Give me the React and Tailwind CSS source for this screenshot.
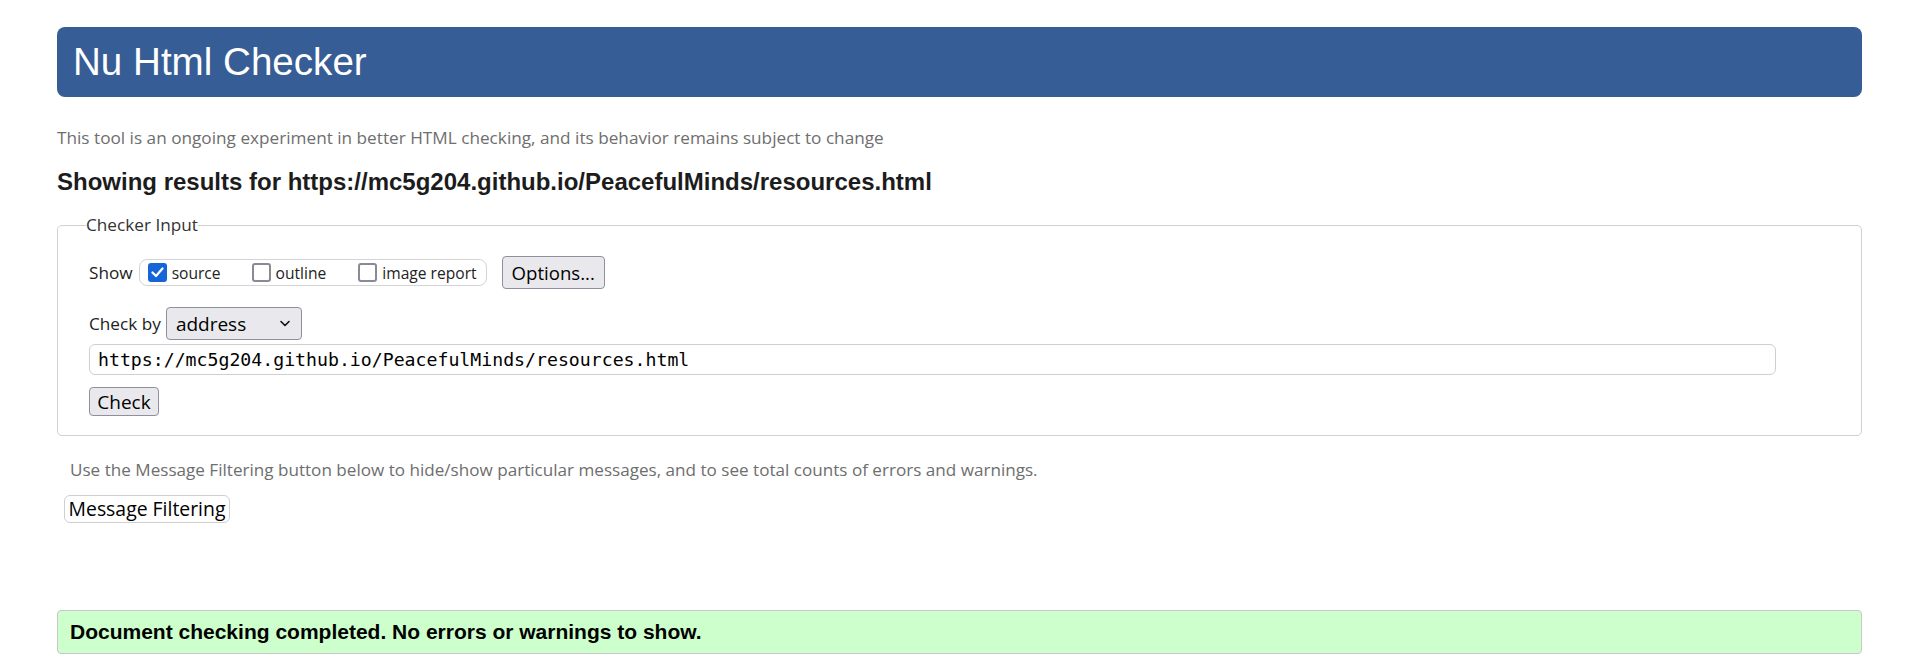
import React from "react";

function Box({ checked }) {
  if (checked) {
    return (
      <span className="flex h-[19px] w-[19px] items-center justify-center rounded-[3px] bg-[#1565d8]">
        <svg width="13" height="11" viewBox="0 0 13 11" fill="none">
          <path d="M1.5 5.5 L5 9 L11.5 1.5" stroke="white" strokeWidth="2.2" strokeLinecap="round" strokeLinejoin="round" />
        </svg>
      </span>
    );
  }
  return <span className="h-[19px] w-[19px] rounded-[3px] border-2 border-[#8a8a96] bg-white" />;
}

function Option({ checked, label, className }) {
  return (
    <label className={"flex items-center gap-[5px] " + className}>
      <Box checked={checked} />
      <span className="text-[15.6px] leading-[20px] text-[#222]">{label}</span>
    </label>
  );
}

export default function App() {
  return (
    <div className="min-h-screen bg-white pl-[57px] pr-[58px] pt-[27px] font-['Open_Sans',sans-serif]">
      <header className="flex h-[70px] items-center rounded-[8px] bg-[#365d95] pl-[16px]">
        <h1 className="font-['Liberation_Sans',Arial,sans-serif] text-[38.6px] leading-[44px] text-white">
          Nu Html Checker
        </h1>
      </header>

      <p className="mt-[29px] text-[17.2px] leading-[24px] text-[#6e6e6e]">
        This tool is an ongoing experiment in better HTML checking, and its behavior remains subject to change
      </p>

      <h2 className="mt-[18px] font-['Liberation_Sans',Arial,sans-serif] text-[24px] font-bold leading-[28px] text-[#1c1c1c]">
        Showing results for https://mc5g204.github.io/PeacefulMinds/resources.html
      </h2>

      <fieldset className="mt-[17px] rounded-[5px] border border-[#d0d0d0] pb-[19px] pl-[31px] pr-[85px] pt-[19px]">
        <legend className="-ml-[3px] text-[17.2px] leading-[24px] text-[#333]">Checker Input</legend>

        <div className="flex h-[33px] items-center">
          <span className="text-[17.2px] text-[#222]">Show</span>
          <div className="ml-[6px] flex h-[27px] items-center rounded-[8px] border border-[#d4d4d4] pl-[8px] pr-[9px]">
            <Option checked label="source" />
            <Option label="outline" className="ml-[31px]" />
            <Option label="image report" className="ml-[32px]" />
          </div>
          <button className="ml-[15px] h-[33px] rounded-[4px] border border-[#8f8f9d] bg-[#e9e9ed] px-[9px] text-[18.6px] leading-[24px] text-black">
            Options...
          </button>
        </div>

        <div className="mt-[18px] flex h-[33px] items-center">
          <span className="text-[17.2px] text-[#222]">Check by</span>
          <div className="ml-[5px] flex h-[33px] w-[136px] items-center justify-between rounded-[4px] border border-[#8f8f9d] bg-[#e9e9ed] pl-[9px] pr-[11px]">
            <span className="text-[19px] font-medium leading-[24px] text-black">address</span>
            <svg width="10" height="7" viewBox="0 0 10 7" fill="none">
              <path d="M1 1.5 L5 5.5 L9 1.5" stroke="#111" strokeWidth="1.6" strokeLinecap="round" strokeLinejoin="round" />
            </svg>
          </div>
        </div>

        <div className="mt-[4px] flex h-[31px] w-full items-center rounded-[6px] border border-[#cfcfcf] pl-[8px] font-['DejaVu_Sans_Mono',monospace] text-[18.2px] text-black">
          https://mc5g204.github.io/PeacefulMinds/resources.html
        </div>

        <button className="mt-[12px] block h-[29px] w-[70px] rounded-[4px] border border-[#8f8f9d] bg-[#e9e9ed] text-[19px] leading-[24px] text-black">
          Check
        </button>
      </fieldset>

      <p className="mt-[22px] pl-[13px] text-[17.1px] leading-[24px] text-[#6e6e6e]">
        Use the Message Filtering button below to hide/show particular messages, and to see total counts of errors and warnings.
      </p>

      <button className="ml-[7px] mt-[13px] block h-[28px] w-[166px] rounded-[6px] border border-[#cfcfcf] bg-white text-[19.4px] leading-[24px] text-black">
        Message Filtering
      </button>

      <div className="mt-[87px] flex h-[44px] items-center rounded-[4px] border border-[#c8c8c8] bg-[#ccffcc] pl-[12px]">
        <p className="font-['Liberation_Sans',Arial,sans-serif] text-[21px] font-bold text-black">
          Document checking completed. No errors or warnings to show.
        </p>
      </div>
    </div>
  );
}
